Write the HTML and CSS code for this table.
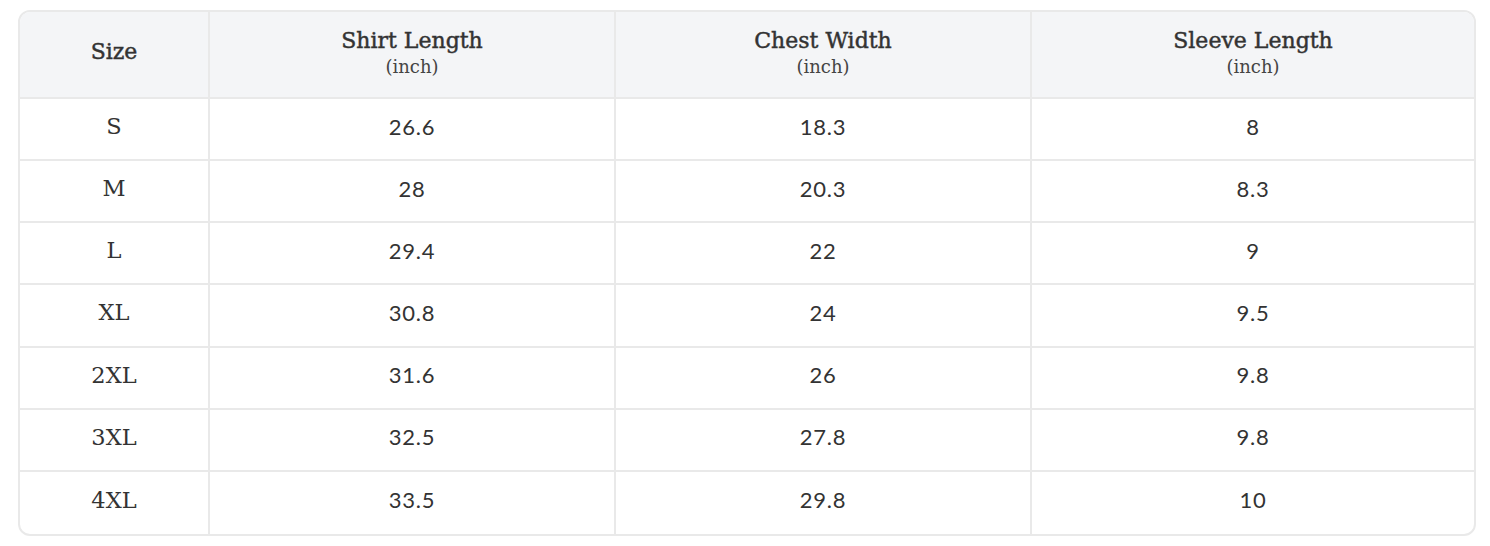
FILE: index.html
```html
<!DOCTYPE html>
<html lang="en">
<head>
<meta charset="utf-8">
<title>Size Chart</title>
<link rel="stylesheet" href="styles.css">
</head>
<body>
<div class="chart">
  <div class="cell head"><span class="title solo">Size</span></div>
  <div class="cell head"><span class="title">Shirt Length</span><span class="unit">(inch)</span></div>
  <div class="cell head"><span class="title">Chest Width</span><span class="unit">(inch)</span></div>
  <div class="cell head last"><span class="title">Sleeve Length</span><span class="unit">(inch)</span></div>

  <div class="cell size">S</div><div class="cell num">26.6</div><div class="cell num">18.3</div><div class="cell num last">8</div>
  <div class="cell size">M</div><div class="cell num">28</div><div class="cell num">20.3</div><div class="cell num last">8.3</div>
  <div class="cell size">L</div><div class="cell num">29.4</div><div class="cell num">22</div><div class="cell num last">9</div>
  <div class="cell size">XL</div><div class="cell num">30.8</div><div class="cell num">24</div><div class="cell num last">9.5</div>
  <div class="cell size">2XL</div><div class="cell num">31.6</div><div class="cell num">26</div><div class="cell num last">9.8</div>
  <div class="cell size">3XL</div><div class="cell num">32.5</div><div class="cell num">27.8</div><div class="cell num last">9.8</div>
  <div class="cell size bottom">4XL</div><div class="cell num bottom">33.5</div><div class="cell num bottom">29.8</div><div class="cell num last bottom">10</div>
</div>
</body>
</html>
```

FILE: styles.css
```css
html, body {
  margin: 0;
  padding: 0;
  background: #ffffff;
}

body {
  padding: 10px 14px 0 18px;
  color: #333333;
}

.chart {
  width: 1458px;
  height: 526px;
  box-sizing: border-box;
  border: 2px solid #e9e9e9;
  border-radius: 12px;
  overflow: hidden;
  display: grid;
  grid-template-columns: 190px 406px 416px 442px;
  grid-template-rows: 87px repeat(7, 1fr);
}

.cell {
  display: flex;
  flex-direction: column;
  align-items: center;
  justify-content: center;
  border-right: 2px solid #e9e9e9;
  border-bottom: 2px solid #e9e9e9;
  padding-bottom: 6px;
  box-sizing: border-box;
}

.cell.last {
  border-right: none;
}

.cell.bottom {
  border-bottom: none;
}

.head {
  background: #f4f5f7;
  font-family: "DejaVu Serif", "Liberation Serif", serif;
  color: #333333;
  padding-bottom: 0;
}

.head .title {
  font-size: 22px;
  line-height: 24px;
  font-weight: 400;
  -webkit-text-stroke: 0.45px #333333;
}

.head .title.solo {
  margin-bottom: 5px;
}

.head .unit {
  font-size: 18px;
  font-weight: 400;
  line-height: 28px;
  color: #444444;
}

.size {
  font-family: "DejaVu Serif", "Liberation Serif", serif;
  font-size: 22.5px;
  color: #333333;
}

.num {
  font-family: Lato, "Liberation Sans", sans-serif;
  font-size: 22px;
  letter-spacing: 0.7px;
  color: #333333;
}
```
